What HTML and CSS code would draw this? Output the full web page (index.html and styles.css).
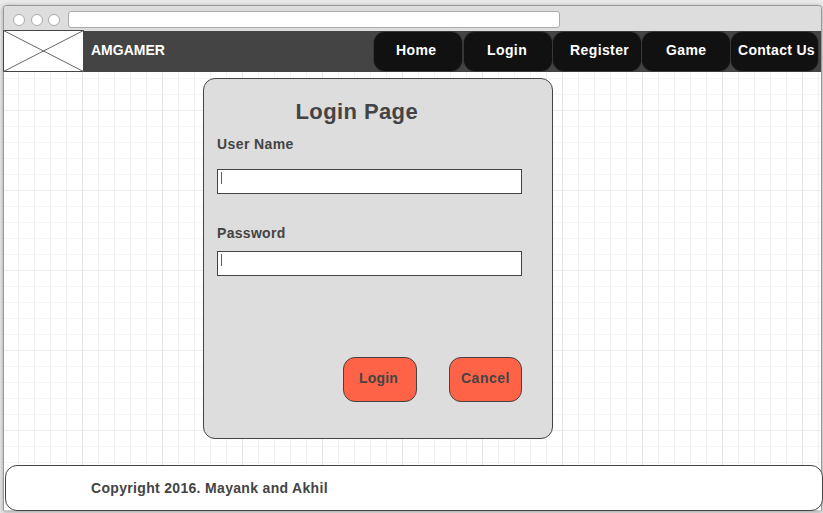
FILE: index.html
```html
<!DOCTYPE html>
<html lang="en">
<head>
<meta charset="utf-8">
<title>AMGAMER</title>
<link rel="stylesheet" href="styles.css">
</head>
<body>
<div class="window">
  <div class="titlebar"><i class="dot"></i><i class="dot"></i><i class="dot"></i><div class="address"></div></div>
  <header class="header">
    <svg class="logo" width="81" height="42" viewBox="0 0 81 42"><rect x=".5" y=".5" width="80" height="41" fill="#fff" stroke="#444"/><path d="M.5.5l80 41M80.500.5l-80 41" fill="none" stroke="#666"/></svg>
    <span class="brand">AMGAMER</span>
    <nav class="nav">
      <a class="tab home"><span>Home</span></a>
      <a class="tab login"><span>Login</span></a>
      <a class="tab register"><span>Register</span></a>
      <a class="tab game"><span>Game</span></a>
      <a class="tab contact"><span>Contact Us</span></a>
    </nav>
  </header>
  <main class="main">
    <form class="card">
      <h1 class="title">Login Page</h1>
      <label class="label user">User Name</label>
      <div class="field"><i class="caret"></i></div>
      <label class="label pass">Password</label>
      <div class="field"><i class="caret"></i></div>
      <div class="actions">
        <div class="button submit"><span class="submit-text">Login</span></div>
        <div class="button cancel"><span class="cancel-text">Cancel</span></div>
      </div>
    </form>
  </main>
  <footer class="footer"><span class="copy">Copyright 2016. Mayank and Akhil</span></footer>
</div>
</body>
</html>
```
FILE: styles.css
```css
* { box-sizing: border-box; }
body {
  margin: 0;
  width: 823px;
  height: 513px;
  overflow: hidden;
  background: #ebebeb;
  font: bold 14px/16px "Liberation Sans", Arial, sans-serif;
  letter-spacing: .4px;
  color: #444;
  white-space: nowrap;
}
.window {
  width: 819px;
  height: 506px;
  margin: 5px 0 0 3px;
  border: 1px solid #999;
  border-bottom-color: #ccc;
  border-radius: 4px 4px 0 0;
  background: #fff;
  box-shadow: 0 1px 5px rgba(0, 0, 0, .35);
}
.titlebar {
  display: flex;
  align-items: flex-start;
  height: 25px;
  padding: 5px 0 0 9px;
  background: #ddd;
  border-radius: 3px 3px 0 0;
}
.dot {
  width: 12px;
  height: 12px;
  margin: 3px 5.500px 0 0;
  border: 1px solid #aaa;
  border-radius: 50%;
  background: #fff;
}
.address {
  width: 492px;
  height: 17px;
  margin-left: 2.500px;
  border: 1px solid #aaa;
  border-radius: 3px;
  background: #fff;
}
.header {
  display: flex;
  height: 41px;
  background: #444;
  color: #fff;
}
.logo { display: block; flex: none; margin: -1px 0 0 -1px; }
.brand { width: 290px; padding: 11px 0 0 7px; letter-spacing: 0; }
.nav { display: flex; gap: 1px; padding-top: 1px; }
.tab {
  width: 88px;
  height: 39px;
  padding-top: 10px;
  border-radius: 11px;
  background: #111;
  box-shadow: 0 0 0 1px #383838;
}
.home { padding-left: 22px; }
.login { margin-left: 1px; padding-left: 23px; }
.register { padding-left: 17px; }
.game { padding-left: 24px; }
.contact { width: 87px; padding-left: 7px; letter-spacing: .3px; }
.main {
  height: 393px;
  padding: 6px 0 0 199px;
  background-image:
    linear-gradient(90deg, #e3e3e3 1px, transparent 1px),
    linear-gradient(#eee 1px, transparent 1px),
    linear-gradient(90deg, #f1f1f1 1px, transparent 1px),
    linear-gradient(#f6f6f6 1px, transparent 1px);
  background-size: 80px 80px, 80px 80px, 16px 16px, 16px 16px;
  background-position: 78px 38px, 78px 38px, 14px 6px, 14px 6px;
}
.card {
  width: 350px;
  height: 361px;
  padding: 19px 13px 0;
  border: 1px solid #444;
  border-radius: 12px;
  background: #ddd;
}
.title {
  height: 28px;
  margin: 0;
  padding-left: 78.500px;
  font-size: 22px;
  line-height: 27px;
}
.label { display: block; }
.user { height: 43px; padding-top: 10px; }
.pass { height: 57px; padding-top: 31px; letter-spacing: .3px; }
.field {
  width: 305px;
  height: 25px;
  padding: 2px 3px;
  border: 1px solid #444;
  background: #fff;
}
.caret { display: block; width: 1px; height: 12px; background: #7f4488; }
.actions { display: flex; gap: 32px; padding: 81px 0 0 126px; }
.button {
  width: 74px;
  height: 45px;
  padding-top: 12px;
  border: 1px solid #444;
  border-radius: 12px;
  background: #ff6347;
}
.submit { padding-left: 15px; letter-spacing: .2px; }
.cancel { width: 73px; padding-left: 11px; letter-spacing: .5px; }
.footer {
  width: 818px;
  height: 46px;
  margin-left: 1px;
  padding: 14px 0 0 85px;
  border: 1px solid #444;
  border-radius: 12px;
  background: #fff;
}
.copy { letter-spacing: .32px; }
```
